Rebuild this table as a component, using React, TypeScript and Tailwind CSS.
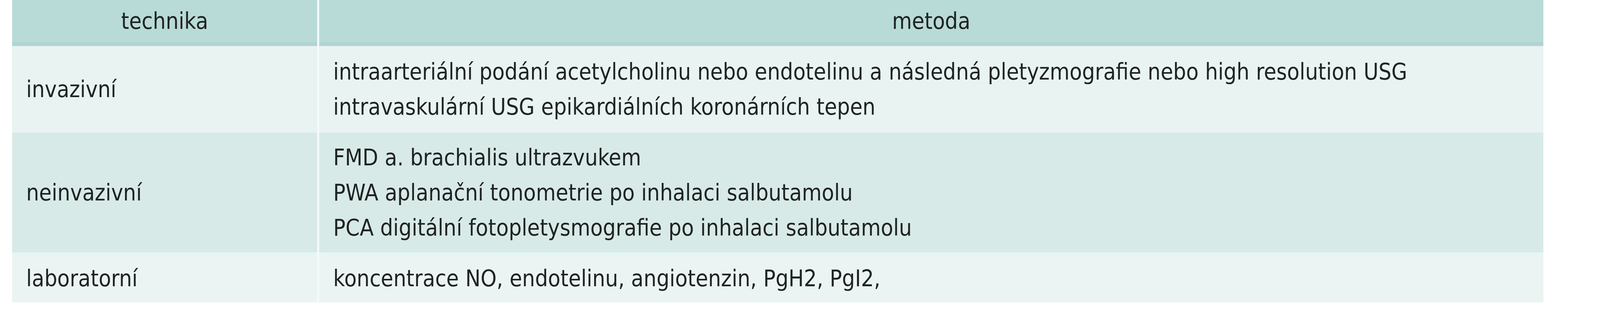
import React from "react";

const font = {
  fontFamily: '"DejaVu Sans Condensed", "Liberation Sans Narrow", "Liberation Sans", sans-serif',
};

export default function App() {
  return (
    <div className="w-[4174px] h-[800px] bg-white" style={font}>
      <div className="ml-[31px] w-[3920px] grid grid-cols-[781px_1fr] gap-x-[5px] bg-[#f4fbfb] text-[#1f2322] text-[58px] leading-[90px]">
        {/* header */}
        <div className="h-[118px] bg-[#b8dbd8] border-b-[10px] border-[#b1d4d1] flex items-center justify-center">
          technika
        </div>
        <div className="h-[118px] bg-[#b8dbd8] border-b-[10px] border-[#b1d4d1] flex items-center justify-center">
          metoda
        </div>

        {/* row 1 */}
        <div className="h-[222px] bg-[#e8f3f2] flex items-center pl-[36px]">invazivní</div>
        <div className="h-[222px] bg-[#e8f3f2] flex flex-col justify-center pl-[36px]">
          <div>intraarteriální podání acetylcholinu nebo endotelinu a následná pletyzmografie nebo high resolution USG</div>
          <div>intravaskulární USG epikardiálních koronárních tepen</div>
        </div>

        {/* row 2 */}
        <div className="h-[307px] bg-[#d8eae7] flex items-center pl-[36px]">neinvazivní</div>
        <div className="h-[307px] bg-[#d8eae7] flex flex-col justify-center pl-[36px]">
          <div>FMD a. brachialis ultrazvukem</div>
          <div>PWA aplanační tonometrie po inhalaci salbutamolu</div>
          <div>PCA digitální fotopletysmografie po inhalaci salbutamolu</div>
        </div>

        {/* row 3 */}
        <div className="h-[128px] bg-[#ebf4f3] border-t-[6px] border-[#e6f4f5] flex items-center pl-[36px]">laboratorní</div>
        <div className="h-[128px] bg-[#ebf4f3] border-t-[6px] border-[#e6f4f5] flex items-center pl-[36px]">
          koncentrace NO, endotelinu, angiotenzin, PgH2, PgI2,
        </div>
      </div>
    </div>
  );
}
